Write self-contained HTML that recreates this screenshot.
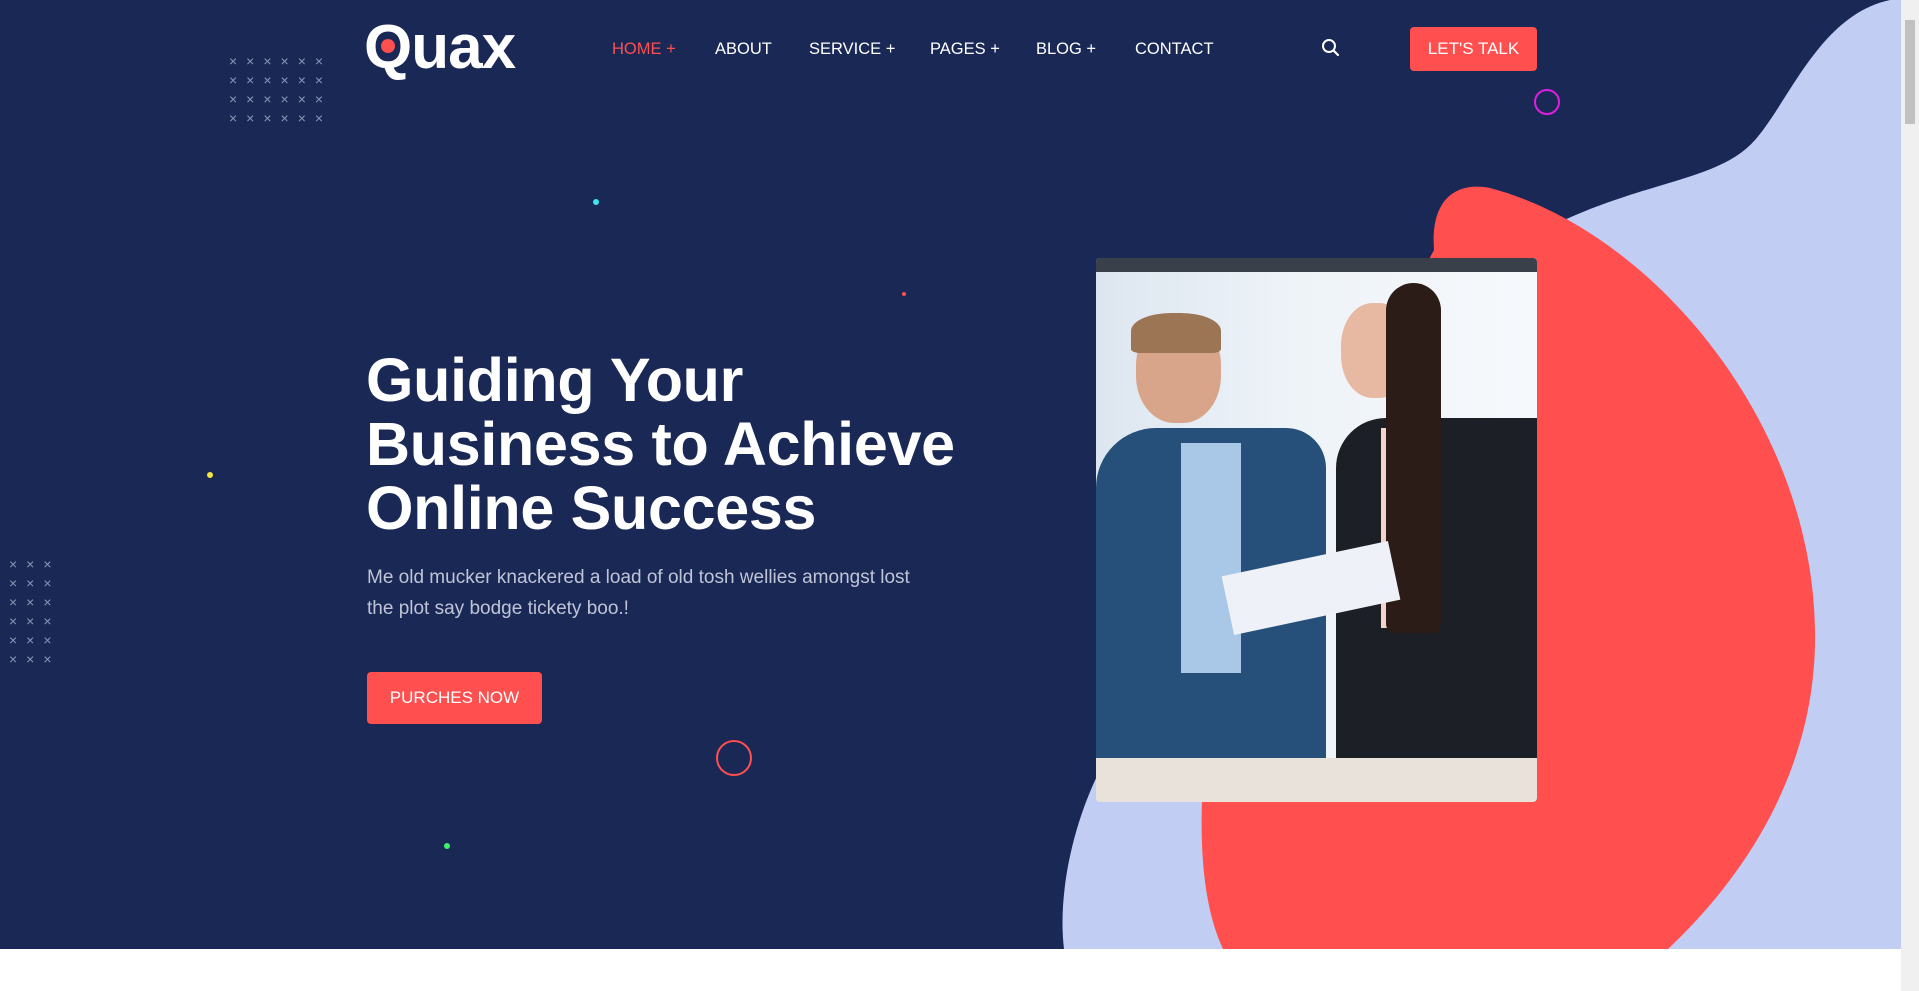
<!DOCTYPE html>
<html><head><meta charset="utf-8"><style>
*{margin:0;padding:0;box-sizing:border-box}
body{width:1919px;height:991px;overflow:hidden;background:#fff;font-family:"Liberation Sans",sans-serif;position:relative}
.hero{position:absolute;left:0;top:0;width:1901px;height:949px;background:#1a2856;overflow:hidden}
.sb{position:absolute;right:0;top:0;width:18px;height:991px;background:#f0f0f0}
.sb i{position:absolute;left:4px;top:20px;width:10px;height:104px;background:#c1c1c1}
.nav a{position:absolute;top:40px;color:#fff;font-size:16.5px;text-decoration:none}
.logo{position:absolute;left:364px;top:12px;color:#fff;font-weight:bold;font-size:62px;letter-spacing:-1px}
.btn{position:absolute;background:#ff4f4f;color:#fff;border-radius:4px;font-size:17px;display:flex;align-items:center;justify-content:center}
h1{position:absolute;left:366px;top:348px;color:#fff;font-size:61px;line-height:64px;font-weight:bold;letter-spacing:-0.3px}
p{position:absolute;left:367px;top:562px;color:#bfc4d6;font-size:19px;line-height:31px}
.grid{position:absolute;color:#8d96b5;font-size:14px;line-height:19px;letter-spacing:9px}
.dot{position:absolute;border-radius:50%}
</style></head><body>
<div class="hero">
<svg width="1901" height="949" style="position:absolute;left:0;top:0">
<path d="M1901,0 L1890,0 C1820,15 1790,100 1755,140 C1720,180 1650,180 1560,222 L1300,420 L1100,770 C1070,830 1058,900 1064,949 L1901,949 Z" fill="#c1cdf3"/>
<path d="M1434,250 C1430,195 1460,182 1490,188 C1650,230 1812,420 1815,630 C1818,790 1720,900 1668,949 L1223,949 C1200,900 1200,830 1203,780 L1300,500 Z" fill="#ff4f4f"/>
<circle cx="1547" cy="102" r="12" fill="none" stroke="#e01ee0" stroke-width="2"/>
<circle cx="734" cy="758" r="17" fill="none" stroke="#ff4f4f" stroke-width="2"/>
</svg>
<div class="logo">Quax</div>
<div class="dot" style="left:381px;top:39px;width:14px;height:14px;background:#ff4f4f"></div>
<div class="nav">
<a style="left:612px;color:#ff4f4f">HOME +</a>
<a style="left:715px">ABOUT</a>
<a style="left:809px">SERVICE +</a>
<a style="left:930px">PAGES +</a>
<a style="left:1036px">BLOG +</a>
<a style="left:1135px">CONTACT</a>
</div>
<svg style="position:absolute;left:1321px;top:38px" width="20" height="20" viewBox="0 0 20 20"><circle cx="8" cy="8" r="6" fill="none" stroke="#fff" stroke-width="2"/><path d="M12.5 12.5 L17 17" stroke="#fff" stroke-width="2.2" stroke-linecap="round"/></svg>
<div class="btn" style="left:1410px;top:27px;width:127px;height:44px">LET'S TALK</div>
<div class="grid" style="left:229px;top:52px">××××××<br>××××××<br>××××××<br>××××××</div>
<div class="grid" style="left:9px;top:555px">×××<br>×××<br>×××<br>×××<br>×××<br>×××</div>
<div class="dot" style="left:593px;top:199px;width:6px;height:6px;background:#3de6ee"></div>
<div class="dot" style="left:902px;top:292px;width:4px;height:4px;background:#ff4f4f"></div>
<div class="dot" style="left:207px;top:472px;width:6px;height:6px;background:#f5e642"></div>
<div class="dot" style="left:444px;top:843px;width:6px;height:6px;background:#3df06a"></div>
<h1>Guiding Your<br>Business to Achieve<br>Online Success</h1>
<p>Me old mucker knackered a load of old tosh wellies amongst lost<br>the plot say bodge tickety boo.!</p>
<div class="btn" style="left:367px;top:672px;width:175px;height:52px">PURCHES NOW</div>
<div style="position:absolute;left:1096px;top:258px;width:441px;height:544px;border-radius:4px;overflow:hidden;background:linear-gradient(90deg,#dde6f0 0%,#eef3f8 45%,#f6f9fc 100%)">
<div style="position:absolute;left:0;top:0;width:441px;height:14px;background:#3a404a"></div>
<div style="position:absolute;left:0;top:170px;width:230px;height:330px;background:#26507a;border-radius:60px 40px 0 0"></div>
<div style="position:absolute;left:85px;top:185px;width:60px;height:230px;background:#a9c8e8"></div>
<div style="position:absolute;left:40px;top:60px;width:85px;height:105px;background:#d9a58a;border-radius:45%"></div>
<div style="position:absolute;left:35px;top:55px;width:90px;height:40px;background:#9c7555;border-radius:45% 45% 10% 10%"></div>
<div style="position:absolute;left:240px;top:160px;width:201px;height:384px;background:#1d1f26;border-radius:50px 0 0 0"></div>
<div style="position:absolute;left:285px;top:170px;width:50px;height:200px;background:#f4d3c8"></div>
<div style="position:absolute;left:245px;top:45px;width:70px;height:95px;background:#e7b9a2;border-radius:45%"></div>
<div style="position:absolute;left:290px;top:25px;width:55px;height:350px;background:#2b1c17;border-radius:30px 30px 10px 10px"></div>
<div style="position:absolute;left:130px;top:300px;width:170px;height:60px;background:#eef1f7;transform:rotate(-12deg)"></div>
<div style="position:absolute;left:0;top:500px;width:441px;height:44px;background:#e8e2da"></div>
</div>
</div>
<div class="sb"><i></i></div>
</body></html>
